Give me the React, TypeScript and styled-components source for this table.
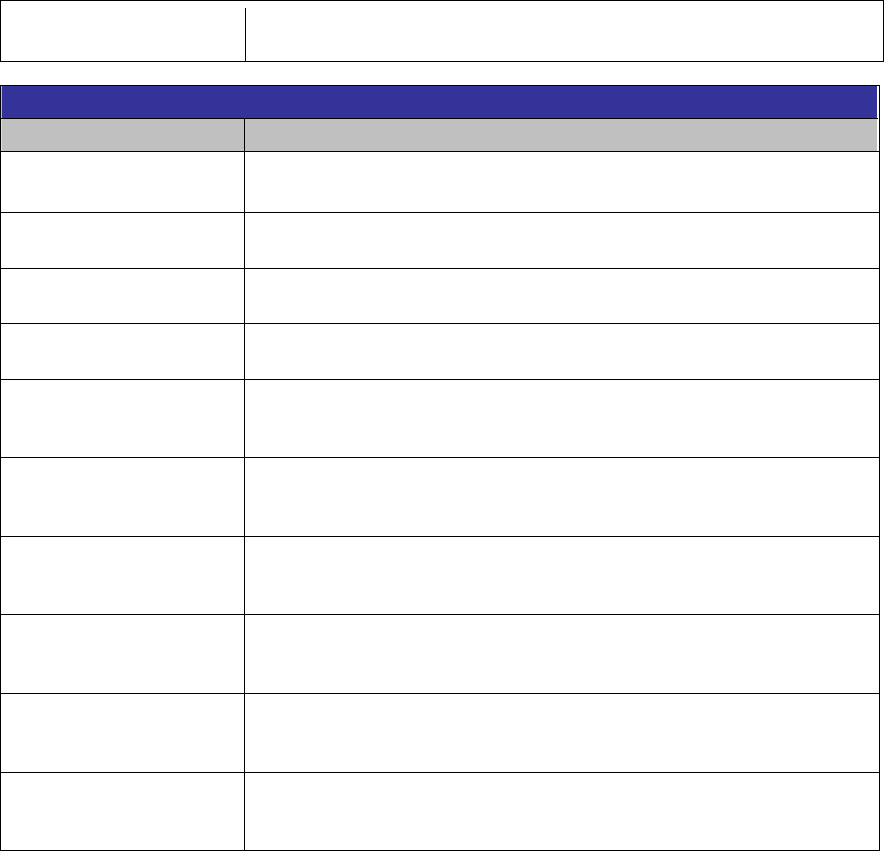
import React from "react";
import styled, { createGlobalStyle } from "styled-components";

const Global = createGlobalStyle`
  html, body {
    margin: 0;
    padding: 0;
    background: #ffffff;
    font-family: "Liberation Sans", Arial, sans-serif;
  }
`;

const Page = styled.div`
  display: flex;
  flex-direction: column;
  align-items: flex-start;
  gap: 23px;
`;

const InfoBox = styled.div`
  box-sizing: border-box;
  width: 884px;
  height: 62px;
  border: 1px solid #000;
  display: grid;
  grid-template-columns: 244px 1fr;
`;

const InfoLabel = styled.div``;

const InfoValue = styled.div`
  margin-top: 7px;
  border-left: 1px solid #000;
`;

const Table = styled.div`
  box-sizing: border-box;
  width: 880px;
  border: 1px solid #000;
  display: flex;
  flex-direction: column;
`;

const TitleBar = styled.div`
  height: 32px;
  background: #333399;
  border-bottom: 1px solid #000;
  box-shadow: inset 1px 0 0 #b8b8d8, inset -1px 0 0 #ffffff;
  margin-right: 1px;
`;

const Row = styled.div<{ $h: number; $head?: boolean; $last?: boolean }>`
  display: grid;
  grid-template-columns: 243px 1fr;
  height: ${(p) => p.$h}px;
  background: ${(p) => (p.$head ? "#c0c0c0" : "#ffffff")};
  border-bottom: ${(p) => (p.$last ? "none" : "1px solid #000")};
  box-shadow: ${(p) =>
    p.$head ? "inset 1px 0 0 #dcdcdc, inset -2px 0 0 #ffffff" : "none"};
`;

const Cell = styled.div``;

const ValueCell = styled.div`
  border-left: 1px solid #000;
`;

const rowHeights = [60, 55, 54, 55, 77, 78, 77, 78, 78, 77];

export default function App() {
  return (
    <>
      <Global />
      <Page>
        <InfoBox>
          <InfoLabel />
          <InfoValue />
        </InfoBox>
        <Table>
          <TitleBar />
          <Row $h={32} $head>
            <Cell />
            <ValueCell />
          </Row>
          {rowHeights.map((h, i) => (
            <Row key={i} $h={h} $last={i === rowHeights.length - 1}>
              <Cell />
              <ValueCell />
            </Row>
          ))}
        </Table>
      </Page>
    </>
  );
}
